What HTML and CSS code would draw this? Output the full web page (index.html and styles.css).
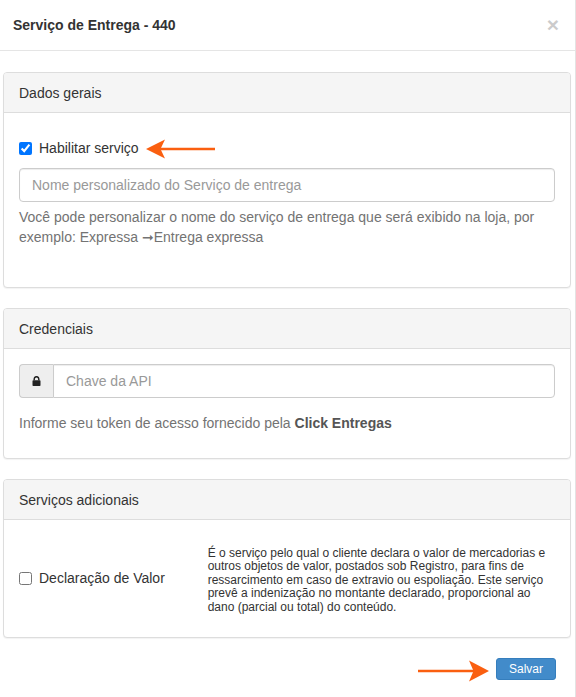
FILE: index.html
```html
<!DOCTYPE html>
<html lang="pt-BR">
<head>
<meta charset="utf-8">
<title>Serviço de Entrega - 440</title>
<link rel="stylesheet" href="styles.css">
</head>
<body>
<div class="modal">
  <div class="modal-header">
    <h4 class="modal-title">Serviço de Entrega - 440</h4>
    <button type="button" class="close">×</button>
  </div>
  <div class="modal-body">
    <div class="panel">
      <div class="panel-heading">Dados gerais</div>
      <div class="panel-body">
        <div class="form-group">
          <div class="checkbox">
            <label><input type="checkbox" checked> Habilitar serviço</label>
          </div>
          <input class="form-control" type="text" placeholder="Nome personalizado do Serviço de entrega">
          <p class="help-block">Você pode personalizar o nome do serviço de entrega que será exibido na loja, por exemplo: Expressa ➞Entrega expressa</p>
        </div>
      </div>
    </div>

    <div class="panel">
      <div class="panel-heading">Credenciais</div>
      <div class="panel-body">
        <div class="form-group">
          <div class="input-group">
            <span class="input-group-addon">
              <svg width="9" height="10" viewBox="0 0 9 10" aria-hidden="true">
                <path d="M2.2 4.3V3a2.3 2.3 0 0 1 4.6 0v1.3" fill="none" stroke="#222" stroke-width="1.5"/>
                <rect x="0.5" y="4.2" width="8" height="5.8" rx="0.8" fill="#222"/>
              </svg>
            </span>
            <input class="form-control" type="text" placeholder="Chave da API">
          </div>
        </div>
        <p class="help-text">Informe seu token de acesso fornecido pela <strong>Click Entregas</strong></p>
      </div>
    </div>

    <div class="panel">
      <div class="panel-heading">Serviços adicionais</div>
      <div class="panel-body">
        <div class="row">
          <div class="col-left">
            <label class="check-label"><input type="checkbox"> Declaração de Valor</label>
          </div>
          <div class="col-right">
            <p class="desc">É o serviço pelo qual o cliente declara o valor de mercadorias e outros objetos de valor, postados sob Registro, para fins de ressarcimento em caso de extravio ou espoliação. Este serviço prevê a indenização no montante declarado, proporcional ao dano (parcial ou total) do conteúdo.</p>
          </div>
        </div>
      </div>
    </div>
  </div>
  <div class="modal-footer">
    <button type="button" class="btn-primary">Salvar</button>
  </div>

  <svg class="pointer pointer-left" width="72" height="22" viewBox="0 0 72 22" aria-hidden="true">
    <line x1="14" y1="11" x2="70" y2="11" stroke="#fa5f10" stroke-width="2.6"/>
    <path d="M1 11 L20 1.5 L15.5 11 L20 20.5 Z" fill="#fa5f10"/>
  </svg>
  <svg class="pointer pointer-right" width="74" height="24" viewBox="0 0 74 24" aria-hidden="true">
    <line x1="2" y1="12" x2="60" y2="12" stroke="#fa5f10" stroke-width="2.6"/>
    <path d="M73 12 L53 1.5 L57.5 12 L53 22.5 Z" fill="#fa5f10"/>
  </svg>
</div>
</body>
</html>
```

FILE: styles.css
```css
* {
  box-sizing: border-box;
}

html, body {
  margin: 0;
  padding: 0;
  background: #fff;
}

body {
  font-family: "Liberation Sans", Arial, "DejaVu Sans", sans-serif;
  font-size: 14px;
  line-height: 20px;
  color: #333;
}

.modal {
  position: relative;
  width: 576px;
  height: 697px;
  border-right: 1px solid #e3e3e3;
  background: #fff;
}

.modal-header {
  display: flex;
  justify-content: space-between;
  align-items: center;
  padding: 15px 16px 15px 13px;
  border-bottom: 1px solid #e5e5e5;
}

.modal-title {
  margin: 0;
  font-size: 14px;
  font-weight: bold;
  line-height: 20px;
  color: #333;
}

.close {
  padding: 0;
  margin: 0;
  border: 0;
  background: transparent;
  font-family: "Liberation Sans", Arial, sans-serif;
  font-size: 21px;
  font-weight: bold;
  line-height: 20px;
  color: #000;
  opacity: 0.2;
}

.modal-body {
  padding: 21px 4px 0 3px;
}

.panel {
  margin-bottom: 20px;
  border: 1px solid #ddd;
  border-radius: 4px;
  background: #fff;
  box-shadow: 0 1px 1px rgba(0, 0, 0, 0.05);
}

.panel-heading {
  padding: 10px 15px 9px;
  background: #f5f5f5;
  border-bottom: 1px solid #ddd;
  border-radius: 3px 3px 0 0;
  color: #333;
}

.panel-body {
  padding: 15px;
}

.form-group {
  display: flow-root;
  margin-bottom: 15px;
}

.checkbox {
  margin: 10px 0;
}

.checkbox label,
.check-label {
  position: relative;
  display: inline-block;
  padding-left: 20px;
  cursor: pointer;
}

.checkbox input,
.check-label input {
  position: absolute;
  left: 0;
  top: 4px;
  width: 13px;
  height: 13px;
  margin: 0;
}

.form-control {
  display: block;
  width: 100%;
  height: 34px;
  padding: 6px 12px;
  font-family: inherit;
  font-size: 14px;
  line-height: 20px;
  color: #555;
  background: #fff;
  border: 1px solid #ccc;
  border-radius: 4px;
  box-shadow: inset 0 1px 1px rgba(0, 0, 0, 0.075);
}

.form-control::placeholder {
  color: #999;
}

.help-block {
  margin: 5px 0 10px;
  color: #737373;
}

.input-group {
  display: flex;
}

.input-group-addon {
  display: flex;
  align-items: center;
  justify-content: center;
  width: 34px;
  height: 34px;
  flex: none;
  background: #eee;
  border: 1px solid #ccc;
  border-right: 0;
  border-radius: 4px 0 0 4px;
}

.input-group .form-control {
  border-radius: 0 4px 4px 0;
}

.help-text {
  margin: 0 0 10px;
  color: #737373;
}

.help-text strong {
  color: #555;
}

.row {
  display: flex;
  align-items: center;
  margin: 0 -15px;
}

.col-left {
  width: 33.333%;
  padding: 0 15px 1px;
}

.col-right {
  width: 66.667%;
  padding: 0 15px;
}

.desc {
  margin: 12px 0 8px;
  font-size: 12px;
  line-height: 13.4px;
  color: #333;
}

.modal-footer {
  display: flex;
  justify-content: flex-end;
  padding: 0 19px 0 0;
}

.btn-primary {
  height: 22px;
  padding: 0 12px;
  font-family: "Liberation Sans", Arial, sans-serif;
  font-size: 12px;
  line-height: 20px;
  color: #fff;
  background: #428bca;
  border: 1px solid #357ebd;
  border-radius: 3px;
}

.pointer {
  position: absolute;
}

.pointer-left {
  left: 145px;
  top: 138px;
}

.pointer-right {
  left: 416px;
  top: 659px;
}
```
